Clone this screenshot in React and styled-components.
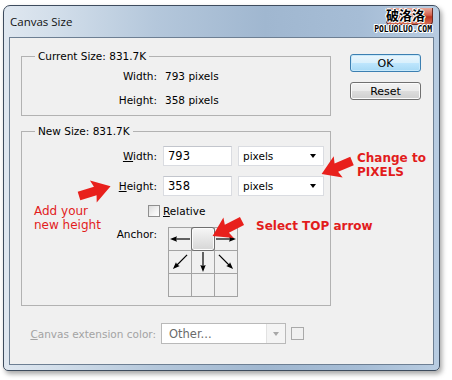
import styled, { createGlobalStyle } from "styled-components";

const GlobalStyle = createGlobalStyle`
  html, body {
    margin: 0;
    padding: 0;
    background: #fff;
  }
  body {
    font-family: "DejaVu Sans", Verdana, sans-serif;
    font-size: 10.5px;
    color: #000;
  }
`;

const Page = styled.div`
  position: relative;
  width: 452px;
  height: 380px;
  padding: 5px 0 0 3px;
  box-sizing: border-box;
  overflow: hidden;
`;

const Window = styled.div`
  width: 437px;
  height: 366px;
  box-sizing: border-box;
  border: 1px solid #3e4c5e;
  border-radius: 7px 7px 5px 5px;
  background: linear-gradient(to right, #dfe7f0 0%, #d2deea 12%, #b4c7db 35%, #a0b7d0 60%, #a6bdd6 82%, #b8cce1 100%);
  box-shadow: 2px 3px 5px rgba(0, 0, 0, 0.35);
  display: flex;
  flex-direction: column;
`;

const TitleBar = styled.div`
  height: 31px;
  flex-shrink: 0;
  display: flex;
  justify-content: space-between;
  padding-left: 6px;
`;

const Title = styled.div`
  align-self: center;
  font-family: "Open Sans", "DejaVu Sans", sans-serif;
  font-size: 11.5px;
  color: #111;
`;

const CloseBtn = styled.div`
  width: 47px;
  height: 17px;
  margin: 2px 6px 0 0;
  box-sizing: border-box;
  border: 1px solid #6a2a22;
  border-top: none;
  border-radius: 0 0 4px 4px;
  background: linear-gradient(to bottom, #e9a89a 0%, #d0604c 45%, #bb3420 55%, #d26a52 100%);
`;

const Client = styled.div`
  flex: 1;
  margin: 0 5px 5px;
  background: #f0f0f0;
  border: 1px solid #6d7f93;
  padding: 11px 0 0 11px;
  display: flex;
  gap: 19px;
`;

const LeftCol = styled.div`
  display: flex;
  flex-direction: column;
  gap: 8px;
`;

const Group = styled.fieldset`
  margin: 0;
  width: 310px;
  box-sizing: border-box;
  min-width: 0;
  border: 1px solid #b2b2b2;
  padding: ${(p) => p.$pad};
`;

const Legend = styled.legend`
  margin-left: 13px;
  padding: 0 3px;
  line-height: 14px;
`;

const InfoGrid = styled.div`
  display: grid;
  grid-template-columns: 135px auto;
  grid-auto-rows: 24px;
  column-gap: 8px;
  align-items: center;
`;

const Label = styled.span`
  text-align: right;
  line-height: 14px;
  color: ${(p) => (p.$disabled ? "#a3a3a3" : "#000")};
`;

const FieldGrid = styled.div`
  display: grid;
  grid-template-columns: 135px 69px 86px;
  grid-auto-rows: 22px;
  column-gap: 6px;
  row-gap: 8px;
  align-items: center;
`;

const TextBox = styled.div`
  height: 20px;
  box-sizing: border-box;
  background: #fff;
  border: 1px solid #dadce1;
  border-top-color: #c2c5cc;
  padding-left: 4px;
  font-size: 11.5px;
  line-height: 18px;
`;

const Select = styled.div`
  height: ${(p) => (p.$disabled ? 21 : 20)}px;
  box-sizing: border-box;
  background: #fff;
  border: 1px solid ${(p) => (p.$disabled ? "#b9b9b9" : "#dadce1")};
  display: flex;
  align-items: center;
  justify-content: space-between;
  padding-left: ${(p) => (p.$disabled ? 7 : 4)}px;
  font-size: ${(p) => (p.$disabled ? "11.5px" : "10.5px")};
  color: ${(p) => (p.$disabled ? "#6a6a6a" : "#000")};
`;

const DropZone = styled.div`
  align-self: stretch;
  width: ${(p) => (p.$disabled ? 18 : 14)}px;
  display: flex;
  align-items: center;
  justify-content: center;
  background: ${(p) => (p.$disabled ? "#f4f4f4" : "transparent")};
  border-left: ${(p) => (p.$disabled ? "1px solid #e2e2e2" : "none")};
  margin-right: ${(p) => (p.$disabled ? 0 : 3)}px;
`;

const Caret = styled.span`
  width: 0;
  height: 0;
  border-left: 3.5px solid transparent;
  border-right: 3.5px solid transparent;
  border-top: 4px solid ${(p) => (p.$disabled ? "#a8a8a8" : "#000")};
`;

const CheckRow = styled.div`
  margin-top: 6px;
  padding-left: 126px;
  height: 16px;
  display: flex;
  align-items: center;
  gap: 3px;
`;

const CheckBox = styled.span`
  width: 12px;
  height: 12px;
  box-sizing: border-box;
  border: 1px solid #8f8f8f;
  background: linear-gradient(135deg, #dcdcdc 0%, #f4f4f4 60%, #ffffff 100%);
`;

const AnchorRow = styled.div`
  margin-top: 8px;
  display: grid;
  grid-template-columns: 135px auto;
  column-gap: 11px;
  align-items: start;
`;

const AnchorGrid = styled.div`
  display: grid;
  grid-template-columns: repeat(3, 22px);
  grid-auto-rows: 22px;
  gap: 1px;
  padding: 1px;
  width: max-content;
  background: #a3a3a3;
`;

const Cell = styled.div`
  background: #f0f0f0;
  display: flex;
  align-items: center;
  justify-content: center;
  ${(p) =>
    p.$active &&
    `
    margin: -1px;
    border: 1px solid #6f6f6f;
    border-radius: 3px;
    background: linear-gradient(to bottom, #f6f6f6 0%, #e6e6e6 50%, #d6d6d6 100%);
    box-shadow: inset 0 0 0 1px #fcfcfc;
  `}
`;

const ExtRow = styled.div`
  margin-top: 9px;
  margin-left: -1px;
  display: grid;
  grid-template-columns: 136px 125px 13px;
  column-gap: 5px;
  align-items: center;
`;

const Swatch = styled.span`
  width: 13px;
  height: 13px;
  box-sizing: border-box;
  border: 1px solid #a9a9a9;
`;

const RightCol = styled.div`
  padding-top: 5px;
  display: flex;
  flex-direction: column;
  gap: 10px;
`;

const Button = styled.div`
  width: 71px;
  height: 18px;
  box-sizing: border-box;
  border-radius: 3px;
  display: flex;
  align-items: center;
  justify-content: center;
  border: 1px solid ${(p) => (p.$default ? "#3c7fb1" : "#707070")};
  background: ${(p) =>
    p.$default
      ? "linear-gradient(to bottom, #eaf6fd 0%, #d9f0fc 50%, #bee6fd 51%, #a7d9f5 100%)"
      : "linear-gradient(to bottom, #f2f2f2 0%, #ebebeb 50%, #dddddd 51%, #cfcfcf 100%)"};
  box-shadow: inset 0 0 0 1px ${(p) => (p.$default ? "#c7e9fb" : "#fbfbfb")};
  font-size: 11px;
`;

const Note = styled.div`
  position: absolute;
  left: ${(p) => p.$x}px;
  top: ${(p) => p.$y}px;
  color: #e21c1c;
  font-family: "DejaVu Sans", Verdana, sans-serif;
  font-size: 12px;
  font-weight: ${(p) => (p.$bold ? 700 : 400)};
  line-height: 14px;
  white-space: nowrap;
`;

const Overlay = styled.svg`
  position: absolute;
  left: 0;
  top: 0;
  pointer-events: none;
`;

const Mark = styled.div`
  position: absolute;
  top: 6px;
  right: 20px;
  display: flex;
  flex-direction: column;
  align-items: flex-end;
  color: #000;
  text-shadow: 1px 0 #fff, -1px 0 #fff, 0 1px #fff, 0 -1px #fff, 1px 1px #fff, -1px -1px #fff;
`;

const MarkCn = styled.span`
  font-family: "Noto Sans CJK SC", sans-serif;
  font-weight: 700;
  font-size: 13px;
  line-height: 17px;
  margin-right: 7px;
`;

const MarkEn = styled.span`
  font-family: "DejaVu Sans Mono", monospace;
  font-weight: 700;
  font-size: 8px;
  line-height: 9px;
  margin-top: 2px;
`;

const GridArrow = ({ angle }) => (
  <svg width="22" height="22" viewBox="0 0 22 22">
    <g transform={`rotate(${angle} 11 11)`}>
      <line x1="21" y1="11" x2="5" y2="11" stroke="#000" strokeWidth="1.2" />
      <polygon points="1,11 8,8.3 7,11 8,13.7" fill="#000" />
    </g>
  </svg>
);

const RedArrow = ({ x, y, angle }) => (
  <path
    transform={`translate(${x} ${y}) rotate(${angle})`}
    d="M0 -4.5 L17 -4.5 L15 -11.5 L33 0 L15 11.5 L17 4.5 L0 4.5 Z"
    fill="#e8201c"
  />
);

const cells = [0, null, 180, -45, -90, -135, undefined, undefined, undefined];

export default function App() {
  return (
    <Page>
      <GlobalStyle />
      <Window>
        <TitleBar>
          <Title>Canvas Size</Title>
          <CloseBtn />
        </TitleBar>
        <Client>
          <LeftCol>
            <Group $pad="1px 0 3px">
              <Legend>Current Size: 831.7K</Legend>
              <InfoGrid>
                <Label>Width:</Label>
                <span>793 pixels</span>
                <Label>Height:</Label>
                <span>358 pixels</span>
              </InfoGrid>
            </Group>

            <Group $pad="7px 0 8px">
              <Legend>New Size: 831.7K</Legend>
              <FieldGrid>
                <Label>
                  <u>W</u>idth:
                </Label>
                <TextBox>793</TextBox>
                <Select>
                  pixels
                  <DropZone>
                    <Caret />
                  </DropZone>
                </Select>
                <Label>
                  <u>H</u>eight:
                </Label>
                <TextBox>358</TextBox>
                <Select>
                  pixels
                  <DropZone>
                    <Caret />
                  </DropZone>
                </Select>
              </FieldGrid>
              <CheckRow>
                <CheckBox />
                <span>
                  <u>R</u>elative
                </span>
              </CheckRow>
              <AnchorRow>
                <Label>Anchor:</Label>
                <AnchorGrid>
                  {cells.map((a, i) => (
                    <Cell key={i} $active={a === null}>
                      {typeof a === "number" && <GridArrow angle={a} />}
                    </Cell>
                  ))}
                </AnchorGrid>
              </AnchorRow>
            </Group>

            <ExtRow>
              <Label $disabled>
                <u>C</u>anvas extension color:
              </Label>
              <Select $disabled>
                Other...
                <DropZone $disabled>
                  <Caret $disabled />
                </DropZone>
              </Select>
              <Swatch />
            </ExtRow>
          </LeftCol>

          <RightCol>
            <Button $default>OK</Button>
            <Button>Reset</Button>
          </RightCol>
        </Client>
      </Window>

      <Mark>
        <MarkCn>破洛洛</MarkCn>
        <MarkEn>POLUOLUO.COM</MarkEn>
      </Mark>

      <Note $x={34} $y={204}>
        Add your
        <br />
        new height
      </Note>
      <Note $x={357} $y={151} $bold>
        Change to
        <br />
        PIXELS
      </Note>
      <Note $x={256} $y={219} $bold>
        Select TOP arrow
      </Note>

      <Overlay width="452" height="380">
        <RedArrow x={79} y={196} angle={-17} />
        <RedArrow x={352} y={161} angle={157} />
        <RedArrow x={242} y={221} angle={153} />
      </Overlay>
    </Page>
  );
}
